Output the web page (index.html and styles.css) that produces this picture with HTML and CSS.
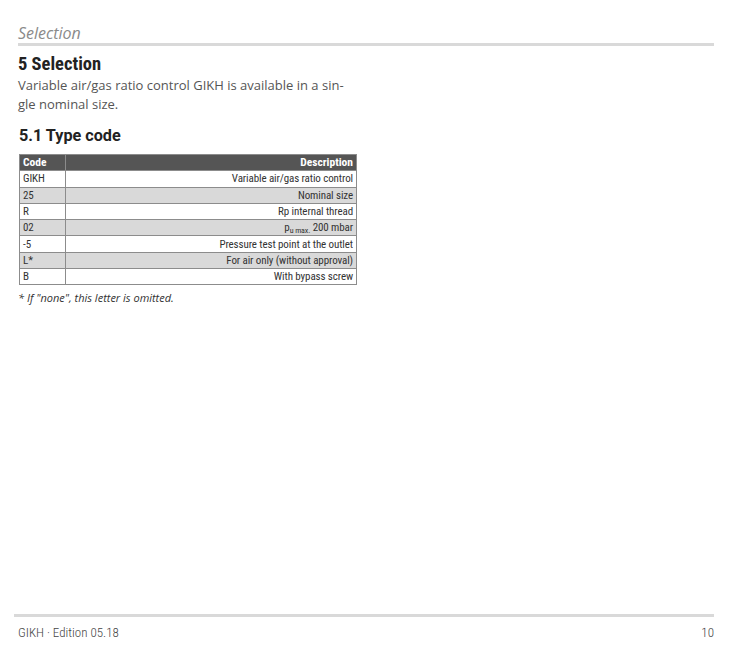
FILE: index.html
```html
<!DOCTYPE html>
<html lang="en">
<head>
<meta charset="utf-8">
<title>Selection</title>
<link rel="stylesheet" href="styles.css">
</head>
<body>
<div class="page">
  <header class="running-head">
    <div class="running-title">Selection</div>
    <div class="rule"></div>
  </header>
  <main class="content">
    <h1 class="h1">5 Selection</h1>
    <p class="lead">Variable air/gas ratio control GIKH is available in a sin-<br>gle nominal size.</p>
    <h2 class="h2">5.1 Type code</h2>
    <table class="typecode">
      <thead>
        <tr><th class="c-code">Code</th><th class="c-desc">Description</th></tr>
      </thead>
      <tbody>
        <tr><td class="c-code">GIKH</td><td class="c-desc">Variable air/gas ratio control</td></tr>
        <tr class="alt"><td class="c-code">25</td><td class="c-desc">Nominal size</td></tr>
        <tr><td class="c-code">R</td><td class="c-desc">Rp internal thread</td></tr>
        <tr class="alt"><td class="c-code">02</td><td class="c-desc">p<sub class="sub">u max.</sub> 200 mbar</td></tr>
        <tr><td class="c-code">-5</td><td class="c-desc">Pressure test point at the outlet</td></tr>
        <tr class="alt"><td class="c-code">L*</td><td class="c-desc">For air only (without approval)</td></tr>
        <tr><td class="c-code">B</td><td class="c-desc">With bypass screw</td></tr>
      </tbody>
    </table>
    <p class="footnote">* If "none", this letter is omitted.</p>
  </main>
  <footer class="page-foot">
    <div class="rule foot-rule"></div>
    <div class="foot-row">
      <span>GIKH · Edition 05.18</span>
      <span>10</span>
    </div>
  </footer>
</div>
</body>
</html>
```
FILE: styles.css
```css
html, body {
  margin: 0;
  padding: 0;
  background: #fff;
}
body {
  font-family: "Open Sans", "Liberation Sans", sans-serif;
  color: #333;
}
.page {
  width: 733px;
  height: 646px;
  display: flex;
  flex-direction: column;
  box-sizing: border-box;
  padding: 23px 19px 0 18px;
}
.running-title {
  font-style: italic;
  font-size: 16px;
  line-height: 19px;
  padding-top: 1px;
  color: #8a8a8a;
}
.rule {
  height: 3px;
  background: #d9d9d9;
}
.content {
  flex: 1;
}
.h1 {
  margin: 8px 0 0 0;
  font-family: "Roboto Condensed", "Roboto", sans-serif;
  font-stretch: condensed;
  font-weight: bold;
  font-size: 18.5px;
  line-height: 21px;
  color: #222;
}
.lead {
  margin: 1px 0 0 0;
  font-size: 13px;
  line-height: 19px;
  color: #555;
}
.h2 {
  margin: 12px 0 0 1px;
  font-family: "Roboto", "Liberation Sans", sans-serif;
  font-weight: bold;
  font-size: 16.2px;
  line-height: 20px;
  color: #222;
}
.typecode {
  margin: 8px 0 0 1px;
  border-collapse: collapse;
  width: 338px;
  font-family: "Roboto Condensed", "Roboto", sans-serif;
  font-stretch: condensed;
  font-size: 11px;
  letter-spacing: -0.1px;
  color: #333;
}
.typecode th, .typecode td {
  border: 1px solid #8c8c8c;
  height: 15.3px;
  padding: 0 3px;
  line-height: 15px;
  white-space: nowrap;
}
.typecode th {
  background: #555;
  color: #fff;
  font-weight: bold;
  font-size: 11.5px;
  letter-spacing: 0;
}
.typecode .c-code {
  width: 39px;
  text-align: left;
}
.typecode .c-desc {
  text-align: right;
}
.typecode tr.alt td {
  background: #d9d9d9;
}
.sub {
  font-size: 8px;
  vertical-align: -2px;
  line-height: 0;
}
.footnote {
  margin: 5px 0 0 0;
  font-style: italic;
  font-size: 11px;
  color: #333;
}
.page-foot {
  padding-bottom: 6px;
}
.foot-rule {
  margin-left: -4px;
}
.foot-row {
  display: flex;
  justify-content: space-between;
  margin-top: 8px;
  font-family: "Roboto Condensed", "Roboto", sans-serif;
  font-stretch: condensed;
  font-weight: 300;
  font-size: 13px;
  line-height: 15px;
  color: #444;
}
```
